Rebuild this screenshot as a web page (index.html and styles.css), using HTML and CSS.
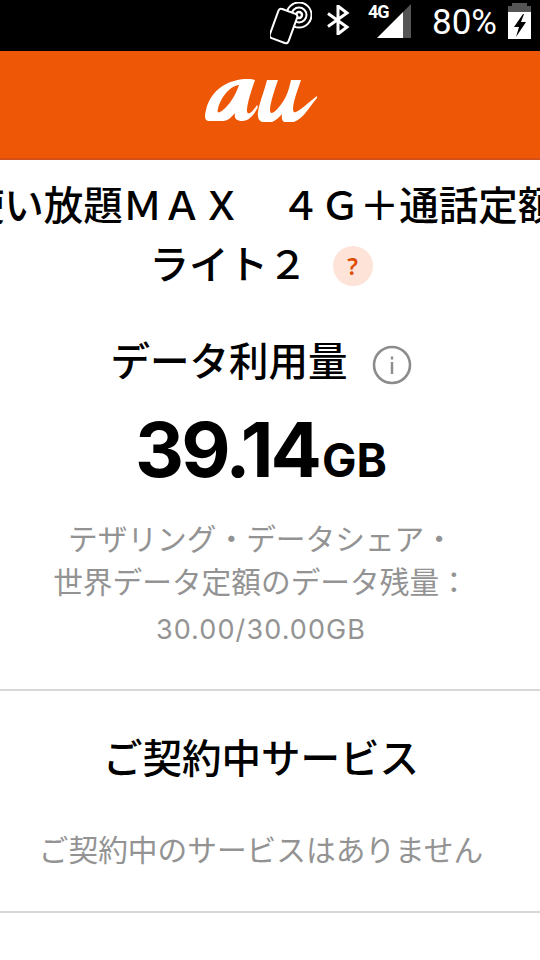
FILE: index.html
```html
<!DOCTYPE html>
<html lang="ja">
<head>
<meta charset="utf-8">
<title>au</title>
<link rel="stylesheet" href="styles.css">
</head>
<body>
<div class="status">
  <svg class="ic-nfc" viewBox="0 0 42 44" width="42" height="44"><g fill="none" stroke="#fff"><circle cx="29" cy="13" r="12.5" stroke-width="2"/><circle cx="29" cy="13" r="7.5" stroke-width="2"/><circle cx="29" cy="13" r="3" stroke-width="2.4"/><rect x="3.5" y="8.5" width="20" height="31" rx="3" transform="rotate(20 13.5 24)" stroke-width="2" fill="#000"/></g></svg>
  <svg class="ic-bt" viewBox="0 0 24 30" width="24" height="30"><path d="M2 8.5l19 13.5-9 7V1l9 7L2 21.500" fill="none" stroke="#fff" stroke-width="3"/></svg>
  <div class="sig">
    <span class="g4">4G</span>
    <svg viewBox="0 0 34 34" width="34" height="34"><path d="M26 8L0 34h26z" fill="#fff"/><path d="M26 8l8-8v34h-8z" fill="#555"/></svg>
  </div>
  <span class="pct">80%</span>
  <svg class="ic-bat" viewBox="0 0 23 36" width="23" height="36"><path d="M4 0h15v3h4v6H0V3h4z" fill="#555"/><path d="M0 9h23v27H0z" fill="#fff"/><path d="M15 11L6 24h5l-3 10 10-15h-5l3-8z" fill="#000"/></svg>
</div>
<header class="bar">
  <svg class="logo" viewBox="0 0 112 44" width="112" height="44"><path fill="#fff" d="M4 43c-4 0-5-4-3-11C5 15 18 3 39 1c5-.4 10 .4 11 1-3 9-7 20-8 29-.4 4 1 5 3 4 3-2 5-5 7-8l1 2c-3 6-8 14-16 14-6 0-8-3-7-8-4 5-8 8-12 8H4zm30-36c-10 1-19 14-21 24-1 3 0 4 2 3 5-2 15-14 19-27z"/><path fill="#fff" d="M62 2h11c-3 9-7 20-8 29 0 4 1 5 4 3 4-3 9-9 13-18 2-5 3-10 4-14h10c-3 9-7 19-8 28 0 4 1 5 3 4 6-3 12-9 21-16l1 1c-8 8-15 25-29 26-6 0-8-3-7-9-5 6-10 9-15 9-7 0-10-4-9-11 1-8 6-20 9-32z"/></svg>
</header>
<main class="content">
  <section class="plan">
    <div class="plan-line">使い放題ＭＡＸ　４Ｇ＋通話定額</div>
    <div class="plan-line second">ライト２<span class="q">?</span></div>
  </section>
  <section class="usage">
    <h2 class="usage-h">データ利用量<span class="info"><svg viewBox="0 0 40 40" width="40" height="40"><circle cx="20" cy="20" r="18" fill="none" stroke="#8c8c8c" stroke-width="2.6"/><rect x="18.800" y="17" width="2.400" height="12" fill="#8c8c8c"/><rect x="18.800" y="11.500" width="2.400" height="3" fill="#8c8c8c"/></svg></span></h2>
    <div class="amount"><span class="num">39.14</span><span class="unit">GB</span></div>
    <p class="note">テザリング・データシェア・<br>世界データ定額のデータ残量：</p>
    <p class="remain">30.00/30.00GB</p>
  </section>
  <section class="service">
    <h2 class="service-h">ご契約中サービス</h2>
    <p class="none">ご契約中のサービスはありません</p>
  </section>
</main>
</body>
</html>
```
FILE: styles.css
```css
* { box-sizing: border-box; }
html, body { margin: 0; padding: 0; }
body {
  width: 540px; height: 960px; overflow: hidden; background: #fff; color: #000;
  font-family: "Noto Sans CJK JP", "Noto Sans", sans-serif;
}
.status {
  height: 51px; background: #000; display: flex; align-items: center; justify-content: flex-end;
  padding: 0 9px 0 0; color: #fff;
}
.ic-nfc { margin-right: 14px; margin-top: -4px; }
.ic-bt { margin-right: 17px; margin-top: -11px; }
.sig { position: relative; width: 44px; height: 38px; display: flex; justify-content: flex-end; align-items: flex-end; margin-right: 21px; margin-top: -13px; }
.g4 { position: absolute; left: 1px; top: 3px; font: 700 18px/18px "Roboto", sans-serif; letter-spacing: -1px; }
.pct { font: 400 35px/40px "Roboto", sans-serif; margin-right: 11px; margin-top: -5px; }
.ic-bat { margin-top: -9px; }
.bar {
  height: 109px; background: #ee5705; border-bottom: 2px solid #d2501a; display: flex; justify-content: center; padding: 27px 18px 0 0;
}
.logo { display: block; }
.content { padding-right: 18px; }
.plan { height: 129px; padding-top: 16px; display: flex; flex-direction: column; align-items: center; }
.plan-line { font-size: 39.500px; line-height: 54px; font-weight: 500; white-space: nowrap; height: 54px; display: flex; align-items: center; justify-content: center; }
.plan-line.second { margin-top: 5px; }
.q {
  width: 40px; height: 40px; border-radius: 50%; background: #fde3d8; color: #dd4a00; margin-left: 25px; margin-top: 8px;
  font: 600 23px/40px "Noto Sans", sans-serif; text-align: center;
}
.usage { height: 402px; border-bottom: 2px solid #d8d8d8; margin-right: -18px; padding-right: 18px; display: flex; flex-direction: column; align-items: center; padding-top: 42px; }
.usage-h { margin: 0; font-size: 39.500px; line-height: 56px; font-weight: 500; display: flex; align-items: center; }
.info { display: flex; margin-left: 24px; margin-top: 12px; }
.amount { margin-top: 17px; display: flex; align-items: baseline; line-height: 90px; font-family: "Inter", sans-serif; font-weight: 700; }
.num { font-size: 76px; letter-spacing: -3px; }
.unit { font-size: 46px; margin-left: 3px; }
.note { margin: 11px 0 0; text-align: center; font-size: 29.700px; line-height: 43px; color: #939393; }
.remain { margin: 10px 0 0; font: 400 27px/36px "Inter", sans-serif; color: #939393; letter-spacing: 1.100px; }
.service { height: 222px; border-bottom: 2px solid #d8d8d8; margin-right: -18px; padding-right: 18px; display: flex; flex-direction: column; align-items: center; padding-top: 35px; }
.service-h { margin: 0; font-size: 39.500px; line-height: 60px; font-weight: 500; }
.none { margin: 41px 0 0; font-size: 29.700px; line-height: 44px; color: #939393; }
```
